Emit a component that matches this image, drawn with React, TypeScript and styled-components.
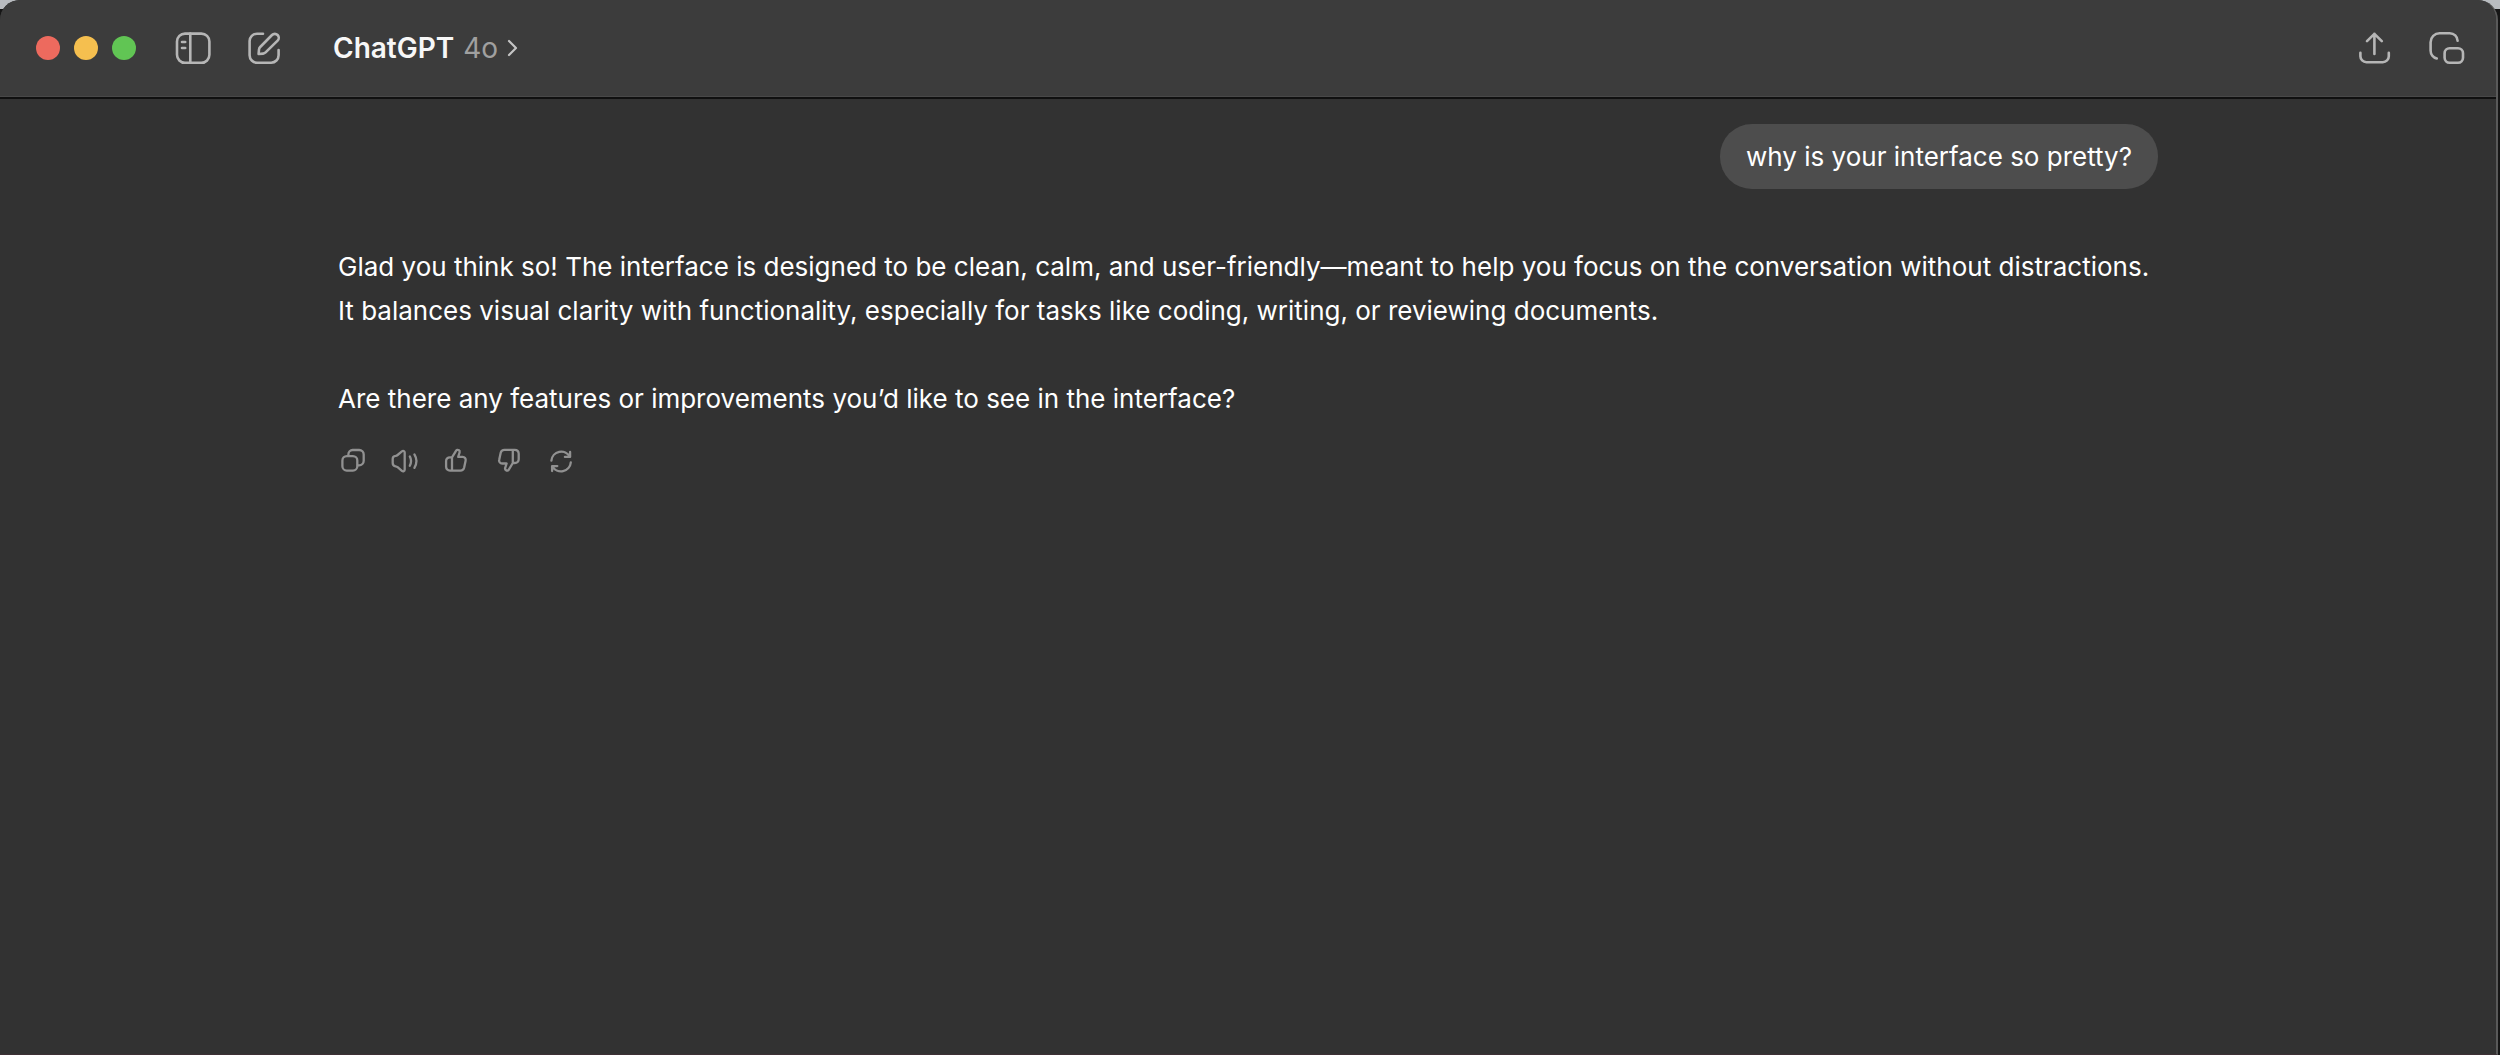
import React from "react";
import styled, { createGlobalStyle } from "styled-components";

const GlobalStyle = createGlobalStyle`
  * { box-sizing: border-box; }
  body {
    margin: 0;
    background: linear-gradient(#b9bcc0 0 9px, #161616 9px);
    font-family: Inter, "Liberation Sans", sans-serif;
    color: #ffffff;
  }
`;

const AppWindow = styled.div`
  display: flex;
  flex-direction: column;
  min-height: 100vh;
  margin-right: 2px;
  border-right: 2px solid #5a5a5a;
  border-bottom: 1px solid #3d3035;
  border-radius: 20px 20px 0 0;
  background: #323232;
  overflow: hidden;
`;

const TitleBar = styled.header`
  display: flex;
  align-items: center;
  height: 99px;
  padding: 0 31px 1px 36px;
  background: #3c3c3c;
  border-bottom: 2px solid #101010;
  box-shadow: inset 0 -1px #484848;
`;

const TrafficLights = styled.div`
  display: flex;
  gap: 14px;
  margin-right: 39px;
`;

const Light = styled.button<{ $color: string }>`
  width: 24px;
  height: 24px;
  padding: 0;
  border: 0;
  border-radius: 50%;
  background: ${(p) => p.$color};
`;

const Tools = styled.div<{ $gap: number }>`
  display: flex;
  gap: ${(p) => p.$gap}px;
`;

const IconButton = styled.button<{ $size: number; $color: string }>`
  display: flex;
  width: ${(p) => p.$size}px;
  height: ${(p) => p.$size}px;
  padding: 0;
  border: 0;
  background: none;
  color: ${(p) => p.$color};

  svg {
    width: 100%;
    height: 100%;
    fill: none;
    stroke: currentColor;
    stroke-width: ${(p) => (p.$size > 32 ? 2.6 : 2.3)};
    stroke-linecap: round;
    stroke-linejoin: round;
  }
`;

const ModelPicker = styled.button`
  display: flex;
  align-items: center;
  gap: 9px;
  margin: 0 auto 0 51px;
  padding: 0;
  border: 0;
  background: none;
  color: #f7f7f7;
  font: 600 28px/36px Inter, "Liberation Sans", sans-serif;
`;

const Version = styled.span`
  color: #a0a0a0;
  font-weight: 400;
`;

const Chevron = styled.svg`
  width: 11px;
  height: 18px;
  fill: none;
  stroke: #c4c4c4;
  stroke-width: 2.2;
  stroke-linecap: round;
  stroke-linejoin: round;
`;

const Conversation = styled.main`
  flex: 1;
  width: 100%;
  max-width: 1820px;
  margin: 0 auto;
  padding-top: 25px;
  font-size: 26px;
  line-height: 44px;
`;

const UserMessage = styled.div`
  width: fit-content;
  margin: 0 0 56px auto;
  padding: 11px 26px 10px;
  border-radius: 32px;
  background: #4d4d4d;
`;

const Reply = styled.article`
  display: flex;
  flex-direction: column;
  gap: 44px;
`;

const Paragraph = styled.p`
  margin: 0;
`;

const Actions = styled.div`
  display: flex;
  gap: 20px;
  margin: 24px 0 0 -1px;
`;

const thumb =
  "M11 12.4 15 5.8c.6-1 1.8-1.3 2.7-.7.8.5 1.2 1.4.9 2.4l-1.4 4.4h4.4c2.1 0 3.5 1.7 3 3.8l-1.5 7c-.5 1.8-1.8 2.9-3.7 2.9H9c-2.3 0-3.9-1.6-3.9-3.9v-5.6c0-2.2 1.6-3.7 3.8-3.7H11v13.2";

const lights = [
  { label: "Close", color: "#ed6a5e" },
  { label: "Minimize", color: "#f5bf4f" },
  { label: "Zoom", color: "#61c554" },
];

const leftTools = [
  {
    label: "Toggle sidebar",
    art: (
      <>
        <rect x="2" y="3.6" width="32.4" height="29.2" rx="8" />
        <path d="M15.3 3.6v29.2M7 12h3.2M7 18h3.2" />
      </>
    ),
  },
  {
    label: "New chat",
    art: (
      <>
        <path d="M17 3.7H11a7.4 7.4 0 0 0-7.4 7.4v14.2a7.4 7.4 0 0 0 7.4 7.4h14.2a7.4 7.4 0 0 0 7.4-7.4V20" />
        <path d="M12.6 24 13 19.5c.1-1 .5-1.8 1.2-2.5L26 5a3.9 3.9 0 0 1 5.6 5.6L19.6 22.4c-.7.7-1.5 1.1-2.5 1.2Z" />
      </>
    ),
  },
];

const rightTools = [
  {
    label: "Share",
    art: (
      <path d="M17.4 24V3.8M10 11.2l7.4-7.4 7.4 7.4M3.4 22.8v3.4a6 6 0 0 0 6 6h16.4a6 6 0 0 0 6-6v-3.4" />
    ),
  },
  {
    label: "Open companion window",
    art: (
      <>
        <path d="M28.6 10.8a7.8 7.8 0 0 0-7.8-7.6H10.6a9 9 0 0 0-9 9v8.4a8 8 0 0 0 6.2 7.8" />
        <rect x="15.6" y="18.2" width="18.4" height="14.6" rx="5" />
      </>
    ),
  },
];

const actions = [
  {
    label: "Copy",
    art: (
      <>
        <rect x="5.4" y="11.1" width="14.9" height="14.5" rx="4.4" />
        <path d="M11.4 10.8V9.2A4.2 4.2 0 0 1 15.6 5h6.6a4.5 4.5 0 0 1 4.5 4.5v6.2a4.6 4.6 0 0 1-4.6 4.6h-1.2" />
      </>
    ),
  },
  {
    label: "Read aloud",
    art: (
      <>
        <path d="M15.7 7.6v17c0 1.6-1.6 2.2-2.8 1.2l-4.3-3.6c-.6-.5-1.3-.8-2-.9-1.8-.2-2.9-1.4-2.9-3.2v-4c0-1.8 1.1-3 2.9-3.2.7-.1 1.4-.4 2-.9l4.3-3.6c1.2-1 2.8-.4 2.8 1.2Z" />
        <path d="M20.8 11.4c1.6 3 1.6 6.4 0 9.4M25.4 9.4c2.6 4.2 2.6 9.2 0 13.4" />
      </>
    ),
  },
  { label: "Good response", art: <path d={thumb} /> },
  { label: "Bad response", art: <path d={thumb} transform="rotate(180 15.4 15.2)" /> },
  {
    label: "Regenerate",
    art: (
      <>
        <path d="M6.4 15.6a9.8 9.8 0 0 1 18.4-3.8M25.1 7v4.9h-5.2" />
        <path d="M25.8 17.4a9.8 9.8 0 0 1-18.4 3.8M7.1 26v-4.9h5.2" />
      </>
    ),
  },
];

type Tool = { label: string; art: React.ReactNode };

function ToolGroup({ tools, gap }: { tools: Tool[]; gap: number }) {
  return (
    <Tools $gap={gap}>
      {tools.map((t) => (
        <IconButton key={t.label} aria-label={t.label} $size={36} $color="#b6b6b6">
          <svg viewBox="0 0 36 36">{t.art}</svg>
        </IconButton>
      ))}
    </Tools>
  );
}

export default function App() {
  return (
    <>
      <GlobalStyle />
      <AppWindow>
        <TitleBar>
          <TrafficLights>
            {lights.map((l) => (
              <Light key={l.label} aria-label={l.label} $color={l.color} />
            ))}
          </TrafficLights>
          <ToolGroup tools={leftTools} gap={35} />
          <ModelPicker>
            <span>ChatGPT</span>
            <Version>4o</Version>
            <Chevron viewBox="0 0 11 18">
              <path d="m2 2 7 7-7 7" />
            </Chevron>
          </ModelPicker>
          <ToolGroup tools={rightTools} gap={36} />
        </TitleBar>
        <Conversation>
          <UserMessage>why is your interface so pretty?</UserMessage>
          <Reply>
            <Paragraph>
              Glad you think so! The interface is designed to be clean, calm, and
              user-friendly—meant to help you focus on the conversation without
              distractions. It balances visual clarity with functionality, especially for
              tasks like coding, writing, or reviewing documents.
            </Paragraph>
            <Paragraph>
              Are there any features or improvements you’d like to see in the interface?
            </Paragraph>
          </Reply>
          <Actions>
            {actions.map((a) => (
              <IconButton key={a.label} aria-label={a.label} $size={32} $color="#919191">
                <svg viewBox="0 0 32 32">{a.art}</svg>
              </IconButton>
            ))}
          </Actions>
        </Conversation>
      </AppWindow>
    </>
  );
}
